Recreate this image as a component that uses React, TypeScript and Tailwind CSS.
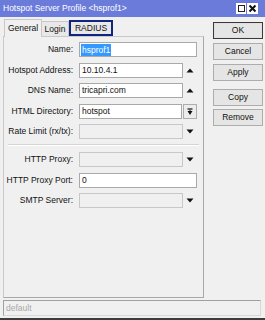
import React from "react";

const font = { fontFamily: '"Liberation Sans", Arial, sans-serif' };

function Up() {
  return (
    <svg width="14" height="15" viewBox="0 0 14 15" className="shrink-0">
      <polygon points="3.5,9.5 10.5,9.5 7,5.5" fill="#111" />
    </svg>
  );
}
function Down() {
  return (
    <svg width="14" height="15" viewBox="0 0 14 15" className="shrink-0">
      <polygon points="3.5,5.5 10.5,5.5 7,9.5" fill="#111" />
    </svg>
  );
}

function Label({ children }: { children: React.ReactNode }) {
  return (
    <div className="w-[69px] text-right pr-0 text-[8.5px] leading-[15px] text-[#111] whitespace-nowrap">
      {children}
    </div>
  );
}

function Input({ value, wide, disabled }: { value?: string; wide?: boolean; disabled?: boolean }) {
  return (
    <div
      className={`h-[15px] border ${disabled ? "border-[#c8c8c8] bg-[#f0f0f0]" : "border-[#a9a9a9] bg-white"} ${wide ? "w-[118px]" : "w-[104px]"} text-[8.5px] leading-[13px] pl-[2px] text-[#111] whitespace-nowrap overflow-hidden`}
    >
      {value}
    </div>
  );
}

function Row({ label, children, mt }: { label: string; children: React.ReactNode; mt: string }) {
  return (
    <div className={`flex items-center h-[15px] ${mt}`}>
      <Label>{label}</Label>
      <div className="w-[6px]" />
      {children}
    </div>
  );
}

function Btn({ children, def, mt }: { children: React.ReactNode; def?: boolean; mt: string }) {
  return (
    <div
      className={`w-[50px] h-[17px] ${mt} flex items-center justify-center text-[8.5px] text-[#111] ${def ? "border border-[#3a3a3a] bg-[#e5e5e5] shadow-[inset_0_0_0_1px_#e0e0e0]" : "border border-[#adadad] bg-[#e5e5e5]"}`}
    >
      {children}
    </div>
  );
}

export default function App() {
  return (
    <div style={font} className="w-[265px] h-[320px] bg-[#f0f0f0] flex flex-col overflow-hidden border-b-2 border-[#3c3c3c]">
      {/* title bar */}
      <div className="h-[17px] bg-[#6a7bd9] flex items-center pl-[3px] pr-[7px] shrink-0">
        <span className="text-white text-[8.5px] whitespace-nowrap">Hotspot Server Profile &lt;hsprof1&gt;</span>
        <div className="flex-1" />
        <div className="w-[10px] h-[11px] bg-white flex items-center justify-center">
          <div className="w-[7px] h-[7px] border border-[#222]" />
        </div>
        <div className="w-[1px]" />
        <div className="w-[11px] h-[11px] bg-white flex items-center justify-center">
          <svg width="9" height="9" viewBox="0 0 9 9">
            <path d="M1.5 1.5 L7.5 7.5 M7.5 1.5 L1.5 7.5" stroke="#111" strokeWidth="2" />
          </svg>
        </div>
      </div>

      {/* body */}
      <div className="flex h-[281px] shrink-0">
        <div className="ml-[3px] w-[201px] flex flex-col">
          {/* tabs */}
          <div className="h-[19px] flex items-end relative">
            <div className="ml-[1px] w-[38px] h-[18px] border border-b-0 border-[#c8c8c8] bg-[#f0f0f0] text-[8.5px] flex items-center justify-center relative top-[1px] z-10 text-[#111]">
              General
            </div>
            <div className="w-[27px] h-[15px] border border-b-0 border-l-0 border-[#c8c8c8] bg-[#e8e8e8] text-[8.5px] flex items-center justify-center text-[#111]">
              Login
            </div>
            <div className="w-[44px] h-[16px] border-2 border-[#0f2580] bg-[#e8e8e8] text-[8.5px] flex items-center justify-center text-[#111]">
              RADIUS
            </div>
          </div>
          {/* panel */}
          <div className="flex-1 border border-[#c9c9c9] border-r-[#a8a8a8] border-b-[#a8a8a8] pt-[5px] flex flex-col">
            <Row label="Name:" mt="">
              <div className="h-[15px] w-[118px] border border-[#a9a9a9] bg-white flex items-center pl-[1px]">
                <span className="bg-[#3399ff] text-white text-[8.5px] leading-[12px] px-[1px]">hsprof1</span>
              </div>
            </Row>
            <Row label="Hotspot Address:" mt="mt-[6px]">
              <Input value="10.10.4.1" />
              <Up />
            </Row>
            <Row label="DNS Name:" mt="mt-[5px]">
              <Input value="tricapri.com" />
              <Up />
            </Row>
            <Row label="HTML Directory:" mt="mt-[6px]">
              <div className="h-[15px] w-[103px] border border-[#a9a9a9] bg-white text-[8.5px] leading-[13px] pl-[2px] text-[#111]">hotspot</div>
              <div className="ml-[1px] w-[14px] h-[15px] border border-[#adadad] bg-[#ececec] flex items-center justify-center">
                <svg width="8" height="8" viewBox="0 0 8 8">
                  <path d="M1.5 1 H6.5" stroke="#111" strokeWidth="1.2" />
                  <polygon points="1.5,3 6.5,3 4,7" fill="#111" />
                  <path d="M4 2 V4" stroke="#111" strokeWidth="1" />
                </svg>
              </div>
            </Row>
            <Row label="Rate Limit (rx/tx):" mt="mt-[5px]">
              <Input disabled />
              <Down />
            </Row>
            <div className="mt-[5px] mx-[4px] h-[2px] border-t border-[#d4d4d4] border-b border-b-white" />
            <Row label="HTTP Proxy:" mt="mt-[6px]">
              <Input disabled />
              <Down />
            </Row>
            <Row label="HTTP Proxy Port:" mt="mt-[6px]">
              <Input value="0" wide />
            </Row>
            <Row label="SMTP Server:" mt="mt-[5px]">
              <Input disabled />
              <Down />
            </Row>
          </div>
        </div>
        {/* buttons */}
        <div className="ml-[9px] pt-[5px] flex flex-col">
          <Btn def mt="">OK</Btn>
          <Btn mt="mt-[4px]">Cancel</Btn>
          <Btn mt="mt-[4px]">Apply</Btn>
          <Btn mt="mt-[8px]">Copy</Btn>
          <Btn mt="mt-[3px]">Remove</Btn>
        </div>
      </div>

      {/* status */}
      <div className="mt-[2px] ml-[3px] w-[258px] h-[16px] border border-[#a0a0a0] border-r-[#d8d8d8] border-b-[#d8d8d8] flex items-center pl-[2px] shrink-0">
        <span className="text-[8.5px] text-[#a8a8a8]">default</span>
      </div>
    </div>
  );
}
